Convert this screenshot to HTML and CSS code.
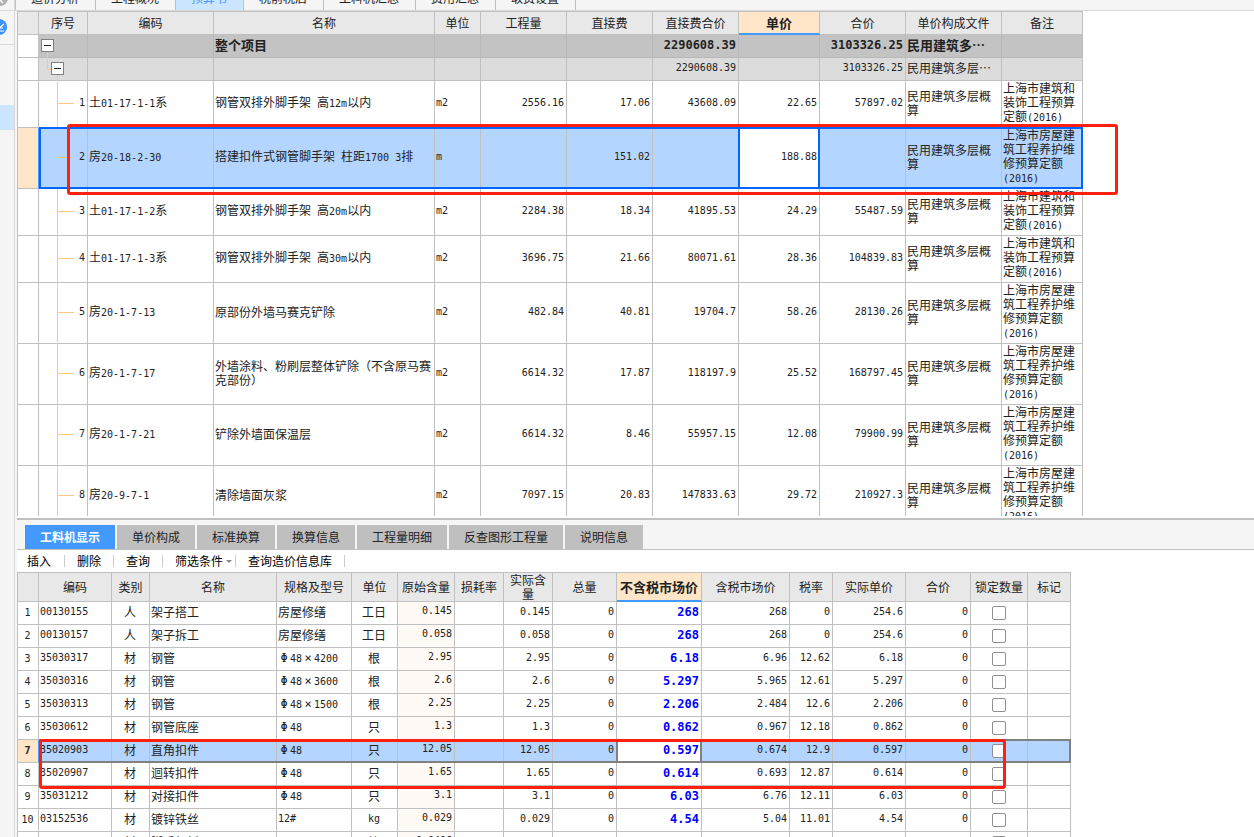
FILE: index.html
```html
<!DOCTYPE html>
<html lang="zh-CN">
<head>
<meta charset="utf-8">
<title>预算书</title>
<link rel="stylesheet" href="styles.css">
</head>
<body>
<aside class="side">
  <div class="side-top"><svg width="8" height="6" viewBox="0 0 8 6"><circle cx="0" cy="-2" r="8" fill="#b0b0b0"/><path d="M0 0L3 3" stroke="#fff" stroke-width="1.5"/></svg></div>
  <div class="side-tool"><svg width="8" height="18" viewBox="0 0 8 18"><circle cx="-1" cy="9" r="8" fill="#3d94ff"/><path d="M0 9.5L4 6M0 10H3M0 13H4" stroke="#fff" stroke-width="1.2" fill="none"/></svg></div>
  <div class="side-current"></div>
</aside>
<div class="work">
  <nav class="top-tabs">
    <button>造价分析</button><button>工程概况</button><button class="on">预算书</button><button>税前税后</button><button>工料机汇总</button><button>费用汇总</button><button>取费设置</button>
  </nav>
  <main class="panes">
    <section class="upper">
      <div class="clip">
        <table class="grid budget">
          <colgroup><col class="c21"><col class="c49"><col class="c126"><col class="c221"><col class="c46"><col class="c86"><col class="c86"><col class="c86"><col class="c81"><col class="c86"><col class="c96"><col class="c81"></colgroup>
          <thead><tr><th></th><th>序号</th><th>编码</th><th>名称</th><th>单位</th><th>工程量</th><th>直接费</th><th>直接费合价</th><th class="cur">单价</th><th>合价</th><th>单价构成文件</th><th>备注</th></tr></thead>
          <tbody>
            <tr class="short g1"><td></td><td class="tree root"><button class="fold" aria-label="折叠"></button></td><td></td><td>整个项目</td><td></td><td></td><td></td><td class="r">2290608.39</td><td></td><td class="r">3103326.25</td><td>民用建筑多…</td><td></td></tr>
            <tr class="short g2"><td></td><td class="tree sub"><button class="fold" aria-label="折叠"></button></td><td></td><td></td><td></td><td></td><td></td><td class="r">2290608.39</td><td></td><td class="r">3103326.25</td><td>民用建筑多层…</td><td></td></tr>
            <tr class="mid"><td></td><td class="tree leaf r">1</td><td>土<span class="n">01-17-1-1</span>系</td><td>钢管双排外脚手架<span class="n"> </span>高<span class="n">12m</span>以内</td><td class="n">m2</td><td class="r">2556.16</td><td class="r">17.06</td><td class="r">43608.09</td><td class="r">22.65</td><td class="r">57897.02</td><td>民用建筑多层概算</td><td>上海市建筑和装饰工程预算定额<span class="n">(2016)</span></td></tr>
            <tr class="tall sel"><td></td><td class="tree leaf r">2</td><td>房<span class="n">20-18-2-30</span></td><td>搭建扣件式钢管脚手架<span class="n"> </span>柱距<span class="n">1700 3</span>排</td><td class="n">m</td><td></td><td class="r">151.02</td><td></td><td class="r edit">188.88</td><td></td><td>民用建筑多层概算</td><td>上海市房屋建筑工程养护维修预算定额<span class="n">(2016)</span></td></tr>
            <tr class="mid"><td></td><td class="tree leaf r">3</td><td>土<span class="n">01-17-1-2</span>系</td><td>钢管双排外脚手架<span class="n"> </span>高<span class="n">20m</span>以内</td><td class="n">m2</td><td class="r">2284.38</td><td class="r">18.34</td><td class="r">41895.53</td><td class="r">24.29</td><td class="r">55487.59</td><td>民用建筑多层概算</td><td>上海市建筑和装饰工程预算定额<span class="n">(2016)</span></td></tr>
            <tr class="mid"><td></td><td class="tree leaf r">4</td><td>土<span class="n">01-17-1-3</span>系</td><td>钢管双排外脚手架<span class="n"> </span>高<span class="n">30m</span>以内</td><td class="n">m2</td><td class="r">3696.75</td><td class="r">21.66</td><td class="r">80071.61</td><td class="r">28.36</td><td class="r">104839.83</td><td>民用建筑多层概算</td><td>上海市建筑和装饰工程预算定额<span class="n">(2016)</span></td></tr>
            <tr class="tall"><td></td><td class="tree leaf r">5</td><td>房<span class="n">20-1-7-13</span></td><td>原部份外墙马赛克铲除</td><td class="n">m2</td><td class="r">482.84</td><td class="r">40.81</td><td class="r">19704.7</td><td class="r">58.26</td><td class="r">28130.26</td><td>民用建筑多层概算</td><td>上海市房屋建筑工程养护维修预算定额<span class="n">(2016)</span></td></tr>
            <tr class="tall"><td></td><td class="tree leaf r">6</td><td>房<span class="n">20-1-7-17</span></td><td>外墙涂料、粉刷层整体铲除（不含原马赛克部份）</td><td class="n">m2</td><td class="r">6614.32</td><td class="r">17.87</td><td class="r">118197.9</td><td class="r">25.52</td><td class="r">168797.45</td><td>民用建筑多层概算</td><td>上海市房屋建筑工程养护维修预算定额<span class="n">(2016)</span></td></tr>
            <tr class="tall"><td></td><td class="tree leaf r">7</td><td>房<span class="n">20-1-7-21</span></td><td>铲除外墙面保温层</td><td class="n">m2</td><td class="r">6614.32</td><td class="r">8.46</td><td class="r">55957.15</td><td class="r">12.08</td><td class="r">79900.99</td><td>民用建筑多层概算</td><td>上海市房屋建筑工程养护维修预算定额<span class="n">(2016)</span></td></tr>
            <tr class="tall"><td></td><td class="tree leaf r">8</td><td>房<span class="n">20-9-7-1</span></td><td>清除墙面灰浆</td><td class="n">m2</td><td class="r">7097.15</td><td class="r">20.83</td><td class="r">147833.63</td><td class="r">29.72</td><td class="r">210927.3</td><td>民用建筑多层概算</td><td>上海市房屋建筑工程养护维修预算定额<span class="n">(2016)</span></td></tr>
          </tbody>
        </table>
      </div>
      <div class="mark mark-a"></div>
    </section>
    <section class="lower">
      <nav class="tabs">
        <button class="on">工料机显示</button><button>单价构成</button><button>标准换算</button><button>换算信息</button><button>工程量明细</button><button>反查图形工程量</button><button>说明信息</button>
      </nav>
      <div class="tools">
        <button>插入</button><button>删除</button><button>查询</button><button class="drop">筛选条件</button><button>查询造价信息库</button>
      </div>
      <table class="grid detail">
        <colgroup><col class="c21"><col class="c73"><col class="c38"><col class="c127"><col class="c75"><col class="c46"><col class="c57"><col class="c49"><col class="c49"><col class="c64"><col class="c85"><col class="c88"><col class="c43"><col class="c73"><col class="c65"><col class="c57"><col class="c43"></colgroup>
        <thead><tr><th></th><th>编码</th><th>类别</th><th>名称</th><th>规格及型号</th><th>单位</th><th>原始含量</th><th>损耗率</th><th>实际含量</th><th>总量</th><th class="cur">不含税市场价</th><th>含税市场价</th><th>税率</th><th>实际单价</th><th>合价</th><th>锁定数量</th><th>标记</th></tr></thead>
        <tbody>
          <tr><td class="no">1</td><td class="n">00130155</td><td class="m">人</td><td>架子搭工</td><td>房屋修缮</td><td class="m">工日</td><td class="r raw">0.145</td><td></td><td class="r">0.145</td><td class="r">0</td><td class="r price">268</td><td class="r">268</td><td class="r">0</td><td class="r">254.6</td><td class="r">0</td><td class="m"><input type="checkbox" aria-label="锁定数量"></td><td></td></tr>
          <tr><td class="no">2</td><td class="n">00130157</td><td class="m">人</td><td>架子拆工</td><td>房屋修缮</td><td class="m">工日</td><td class="r raw">0.058</td><td></td><td class="r">0.058</td><td class="r">0</td><td class="r price">268</td><td class="r">268</td><td class="r">0</td><td class="r">254.6</td><td class="r">0</td><td class="m"><input type="checkbox" aria-label="锁定数量"></td><td></td></tr>
          <tr><td class="no">3</td><td class="n">35030317</td><td class="m">材</td><td>钢管</td><td class="n"><span class="w">Φ</span>48<span class="w">×</span>4200</td><td class="m">根</td><td class="r raw">2.95</td><td></td><td class="r">2.95</td><td class="r">0</td><td class="r price">6.18</td><td class="r">6.96</td><td class="r">12.62</td><td class="r">6.18</td><td class="r">0</td><td class="m"><input type="checkbox" aria-label="锁定数量"></td><td></td></tr>
          <tr><td class="no">4</td><td class="n">35030316</td><td class="m">材</td><td>钢管</td><td class="n"><span class="w">Φ</span>48<span class="w">×</span>3600</td><td class="m">根</td><td class="r raw">2.6</td><td></td><td class="r">2.6</td><td class="r">0</td><td class="r price">5.297</td><td class="r">5.965</td><td class="r">12.61</td><td class="r">5.297</td><td class="r">0</td><td class="m"><input type="checkbox" aria-label="锁定数量"></td><td></td></tr>
          <tr><td class="no">5</td><td class="n">35030313</td><td class="m">材</td><td>钢管</td><td class="n"><span class="w">Φ</span>48<span class="w">×</span>1500</td><td class="m">根</td><td class="r raw">2.25</td><td></td><td class="r">2.25</td><td class="r">0</td><td class="r price">2.206</td><td class="r">2.484</td><td class="r">12.6</td><td class="r">2.206</td><td class="r">0</td><td class="m"><input type="checkbox" aria-label="锁定数量"></td><td></td></tr>
          <tr><td class="no">6</td><td class="n">35030612</td><td class="m">材</td><td>钢管底座</td><td class="n"><span class="w">Φ</span>48</td><td class="m">只</td><td class="r raw">1.3</td><td></td><td class="r">1.3</td><td class="r">0</td><td class="r price">0.862</td><td class="r">0.967</td><td class="r">12.18</td><td class="r">0.862</td><td class="r">0</td><td class="m"><input type="checkbox" aria-label="锁定数量"></td><td></td></tr>
          <tr class="sel"><td class="no">7</td><td class="n">35020903</td><td class="m">材</td><td>直角扣件</td><td class="n"><span class="w">Φ</span>48</td><td class="m">只</td><td class="r raw">12.05</td><td></td><td class="r">12.05</td><td class="r">0</td><td class="r price edit">0.597</td><td class="r">0.674</td><td class="r">12.9</td><td class="r">0.597</td><td class="r">0</td><td class="m"><input type="checkbox" aria-label="锁定数量"></td><td></td></tr>
          <tr><td class="no">8</td><td class="n">35020907</td><td class="m">材</td><td>迴转扣件</td><td class="n"><span class="w">Φ</span>48</td><td class="m">只</td><td class="r raw">1.65</td><td></td><td class="r">1.65</td><td class="r">0</td><td class="r price">0.614</td><td class="r">0.693</td><td class="r">12.87</td><td class="r">0.614</td><td class="r">0</td><td class="m"><input type="checkbox" aria-label="锁定数量"></td><td></td></tr>
          <tr><td class="no">9</td><td class="n">35031212</td><td class="m">材</td><td>对接扣件</td><td class="n"><span class="w">Φ</span>48</td><td class="m">只</td><td class="r raw">3.1</td><td></td><td class="r">3.1</td><td class="r">0</td><td class="r price">6.03</td><td class="r">6.76</td><td class="r">12.11</td><td class="r">6.03</td><td class="r">0</td><td class="m"><input type="checkbox" aria-label="锁定数量"></td><td></td></tr>
          <tr><td class="no">10</td><td class="n">03152536</td><td class="m">材</td><td>镀锌铁丝</td><td class="n">12#</td><td class="m n">kg</td><td class="r raw">0.029</td><td></td><td class="r">0.029</td><td class="r">0</td><td class="r price">4.54</td><td class="r">5.04</td><td class="r">11.01</td><td class="r">4.54</td><td class="r">0</td><td class="m"><input type="checkbox" aria-label="锁定数量"></td><td></td></tr>
          <tr><td class="no"></td><td></td><td class="m">材</td><td>脚手架板</td><td></td><td class="m">块</td><td class="r raw">0.0496</td><td></td><td></td><td></td><td></td><td></td><td></td><td></td><td></td><td class="m"><input type="checkbox" aria-label="锁定数量"></td><td></td></tr>
        </tbody>
      </table>
      <div class="mark mark-b"></div>
    </section>
  </main>
</div>
</body>
</html>
```

FILE: styles.css
```css
* { box-sizing: border-box; }

body {
  margin: 0;
  height: 100vh;
  display: flex;
  overflow: hidden;
  background: #f5f5f5;
  color: #222;
  font-family: "Noto Sans CJK SC", sans-serif;
  font-size: 12px;
  line-height: 14px;
}

button {
  margin: 0;
  padding: 0;
  border: 0;
  background: none;
  color: inherit;
  font: inherit;
  white-space: nowrap;
}

/* left rail */
.side { flex: 0 0 15px; border-right: 1px solid #d9d9d9; }
.side svg { display: block; }
.side-top { height: 11px; border-bottom: 1px solid #d9d9d9; }
.side-tool { height: 34px; padding-top: 7px; border-bottom: 1px solid #d9d9d9; }
.side-current { height: 25px; margin-top: 60px; background: #cce6ff; }

.work {
  flex: 1;
  min-width: 0;
  display: flex;
  flex-direction: column;
}

/* page tabs, scrolled so that only their lower edge shows */
.top-tabs {
  height: 11px;
  display: flex;
  align-items: flex-end;
  overflow: hidden;
  border-bottom: 1px solid #d9d9d9;
}
.top-tabs button {
  height: 20px;
  padding: 0 16px 4px 15px;
  border-right: 1px solid #c0c0c0;
  flex: none;
}
.top-tabs button:first-child { border-left: 1px solid #c0c0c0; }
.top-tabs .on { background: #cce6ff; color: #3d94ff; }

.panes {
  flex: 1;
  min-height: 0;
  margin-left: 2px;
  display: grid;
  grid-template-rows: minmax(0, 509fr) minmax(0, 317fr);
  grid-template-columns: minmax(0, 1fr);
  background: #fff;
}
.upper {
  position: relative;
  padding-bottom: 2px;
  border-bottom: 2px solid #c0c0c0;
}
.clip { height: 100%; overflow: hidden; }
.lower { position: relative; overflow: hidden; }

/* grids */
.grid {
  width: 0;
  table-layout: fixed;
  border-collapse: separate;
  border-spacing: 0;
  border-top: 1px solid #c0c0c0;
  border-left: 1px solid #c0c0c0;
}
.c21 { width: 21px; }
.c38 { width: 38px; }
.c43 { width: 43px; }
.c46 { width: 46px; }
.c49 { width: 49px; }
.c57 { width: 57px; }
.c64 { width: 64px; }
.c65 { width: 65px; }
.c73 { width: 73px; }
.c75 { width: 75px; }
.c81 { width: 81px; }
.c85 { width: 85px; }
.c86 { width: 86px; }
.c88 { width: 88px; }
.c96 { width: 96px; }
.c126 { width: 126px; }
.c127 { width: 127px; }
.c221 { width: 221px; }

.grid th, .grid td {
  padding: 0 2px;
  border-right: 1px solid #c0c0c0;
  border-bottom: 1px solid #c0c0c0;
  vertical-align: middle;
  text-align: left;
}
.grid td { padding: 0 2px 2px 1px; }
.grid th {
  background: #e8e8e8;
  font-weight: 400;
  text-align: center;
}
.grid th.cur {
  background: #ffe6c8;
  border-bottom: 2px solid #4499ff;
  font-size: 13px;
  font-weight: 700;
}
.budget th { height: 23px; }
.detail th { height: 29px; }
.short { height: 23px; }
.mid { height: 47px; }
.tall { height: 61px; }
.detail tbody tr { height: 23px; }

.grid .n, .grid .r, .grid .no {
  font-family: "DejaVu Sans Mono", "Noto Sans CJK SC", monospace;
  font-size: 10px;
}
.grid .r { text-align: right; }
.grid .m, .grid .no { text-align: center; }
.grid .no { padding-bottom: 0; }
.w { display: inline-block; width: 12px; text-align: center; font-size: 12px; }

.g1 td { background: #c3c3c3; border-color: #b8b8b8; font-size: 13px; font-weight: 700; }
.g2 td { background: #dcdcdc; }
.g1 td:first-child, .g2 td:first-child { background: #fff; border-color: #c0c0c0; }
.g1 td, .g2 td { white-space: nowrap; }
.grid .g1 .r { font-size: 12px; }

/* tree column */
.tree { position: relative; }
.fold {
  position: absolute;
  top: 4px;
  left: 2px;
  z-index: 1;
  width: 13px;
  height: 13px;
  border: 1px solid #808080;
  background: linear-gradient(#222, #222) center / 7px 1px no-repeat #fff;
}
.sub .fold { left: 12px; }
.sub::before {
  content: "";
  position: absolute;
  left: 8px;
  top: -6px;
  width: 4px;
  height: 17px;
  border-left: 1px solid #ffc880;
  border-bottom: 1px solid #ffc880;
}
.sub::after {
  content: "";
  position: absolute;
  left: 18px;
  top: 17px;
  bottom: -1px;
  width: 1px;
  background: #ffc880;
}
.leaf::before {
  content: "";
  position: absolute;
  left: 18px;
  top: 0;
  bottom: -1px;
  width: 1px;
  background: #ffc880;
}
.leaf::after {
  content: "";
  position: absolute;
  left: 18px;
  top: calc(50% - 1px);
  width: 17px;
  height: 1px;
  background: #ffc880;
}

/* selected row and its edited cell */
.sel { position: relative; }
.sel td, .grid .sel .raw { background: #b3d5ff; }
.grid .sel td:first-child { background: #ffe6c8; font-weight: 700; }
.grid .sel td:first-child { border-right-color: #4499ff; }
.grid .sel .edit { position: relative; background: #fff; }
.sel::after, .sel .edit::after {
  content: "";
  position: absolute;
  top: -1px;
  right: 0;
  bottom: 0;
  left: 21px;
  border: 2px solid #0066ff;
}
.sel .edit::after { left: -1px; right: -1px; bottom: -1px; }
.detail .sel::after, .detail .sel .edit::after { border-color: #808080; }

.grid .raw { padding-bottom: 5px; background: #fffaf5; }
.grid .price { color: #00f; font-size: 12px; font-weight: 700; }
.detail input {
  display: block;
  appearance: none;
  width: 14px;
  height: 14px;
  margin: 2px auto 0;
  border: 1px solid #909090;
  border-radius: 2px;
  background: #fff;
}

/* lower pane tabs and toolbar */
.tabs {
  display: flex;
  gap: 2px;
  height: 30px;
  padding: 5px 8px 0;
  border-bottom: 1px solid #c0c0c0;
  background: #f5f5f5;
}
.tabs button { padding: 0 15px; background: #bfbfbf; }
.tabs .on { background: #4499ff; color: #fff; font-weight: 700; }
.tools { display: flex; height: 22px; align-items: center; color: #000; }
.tools button {
  position: relative;
  padding: 0 13px 0 12px;
}
.tools button:first-child { padding: 0 14px 0 10px; }
.tools button::after {
  content: "";
  position: absolute;
  right: 0;
  top: 1px;
  width: 1px;
  height: 12px;
  background: #ccc;
}
.tools .drop::before {
  content: "";
  position: absolute;
  right: 4px;
  top: 6px;
  border: 3px solid transparent;
  border-top-color: #888;
}

/* red call-out frames over the rows */
.mark {
  position: absolute;
  z-index: 2;
  border: 3px solid #ff2010;
  border-radius: 3px;
  pointer-events: none;
}
.mark-a { left: 50px; top: 113px; width: 1051px; height: 71px; }
.mark-b { left: 22px; top: 219px; width: 967px; height: 50px; }
```
